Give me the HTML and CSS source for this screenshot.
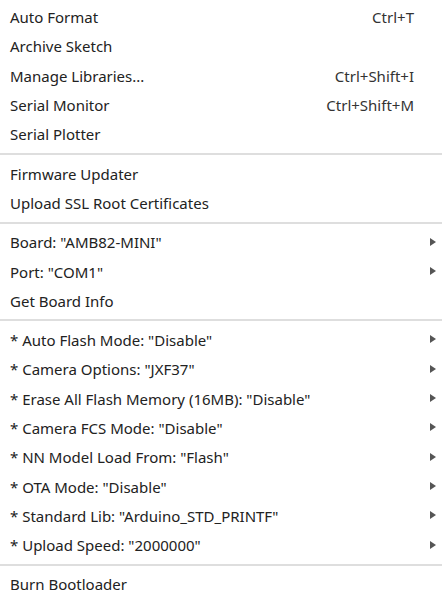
FILE: index.html
```
<!DOCTYPE html>
<html lang="en">
<head>
    <meta charset="UTF-8">
    <meta name="viewport" content="width=device-width, initial-scale=1.0">
    <title>Tools menu</title>
    <link rel="stylesheet" href="styles.css">
</head>
<body>
    <div class="menu">
        <div class="item"><span class="label">Auto Format</span><span class="key">Ctrl+T</span></div>
        <div class="item"><span class="label">Archive Sketch</span></div>
        <div class="item"><span class="label">Manage Libraries...</span><span class="key">Ctrl+Shift+I</span></div>
        <div class="item"><span class="label">Serial Monitor</span><span class="key">Ctrl+Shift+M</span></div>
        <div class="item"><span class="label">Serial Plotter</span></div>
        <div class="sep"></div>
        <div class="item"><span class="label">Firmware Updater</span></div>
        <div class="item"><span class="label">Upload SSL Root Certificates</span></div>
        <div class="sep"></div>
        <div class="item sub"><span class="label">Board: "AMB82-MINI"</span><span class="arrow"></span></div>
        <div class="item sub"><span class="label">Port: "COM1"</span><span class="arrow"></span></div>
        <div class="item"><span class="label">Get Board Info</span></div>
        <div class="sep"></div>
        <div class="item sub"><span class="label">* Auto Flash Mode: "Disable"</span><span class="arrow"></span></div>
        <div class="item sub"><span class="label">* Camera Options: "JXF37"</span><span class="arrow"></span></div>
        <div class="item sub"><span class="label">* Erase All Flash Memory (16MB): "Disable"</span><span class="arrow"></span></div>
        <div class="item sub"><span class="label">* Camera FCS Mode: "Disable"</span><span class="arrow"></span></div>
        <div class="item sub"><span class="label">* NN Model Load From: "Flash"</span><span class="arrow"></span></div>
        <div class="item sub"><span class="label">* OTA Mode: "Disable"</span><span class="arrow"></span></div>
        <div class="item sub"><span class="label">* Standard Lib: "Arduino_STD_PRINTF"</span><span class="arrow"></span></div>
        <div class="item sub"><span class="label">* Upload Speed: "2000000"</span><span class="arrow"></span></div>
        <div class="sep"></div>
        <div class="item"><span class="label">Burn Bootloader</span></div>
    </div>
</body>
</html>
```

FILE: styles.css
```
* {
    box-sizing: border-box;
}
body {
    margin: 0;
    background: #fff;
    font-family: 'Noto Sans', sans-serif;
    font-size: 15px;
    color: #222;
}
.menu {
    display: flex;
    flex-direction: column;
    padding-top: 2.5px;
}
.item {
    height: 29.3px;
    flex-shrink: 0;
    display: flex;
    align-items: center;
    padding: 0 28px 0 10px;
    position: relative;
}
.label {
    flex: 1;
    white-space: nowrap;
}
.key {
    color: #333;
}
.arrow {
    position: absolute;
    right: 6px;
    top: 10px;
    width: 0;
    height: 0;
    border-top: 4.5px solid transparent;
    border-bottom: 4.5px solid transparent;
    border-left: 6px solid #555;
}
.sep {
    height: 2px;
    flex-shrink: 0;
    margin: 4px 0;
    background: #dedede;
}
```
